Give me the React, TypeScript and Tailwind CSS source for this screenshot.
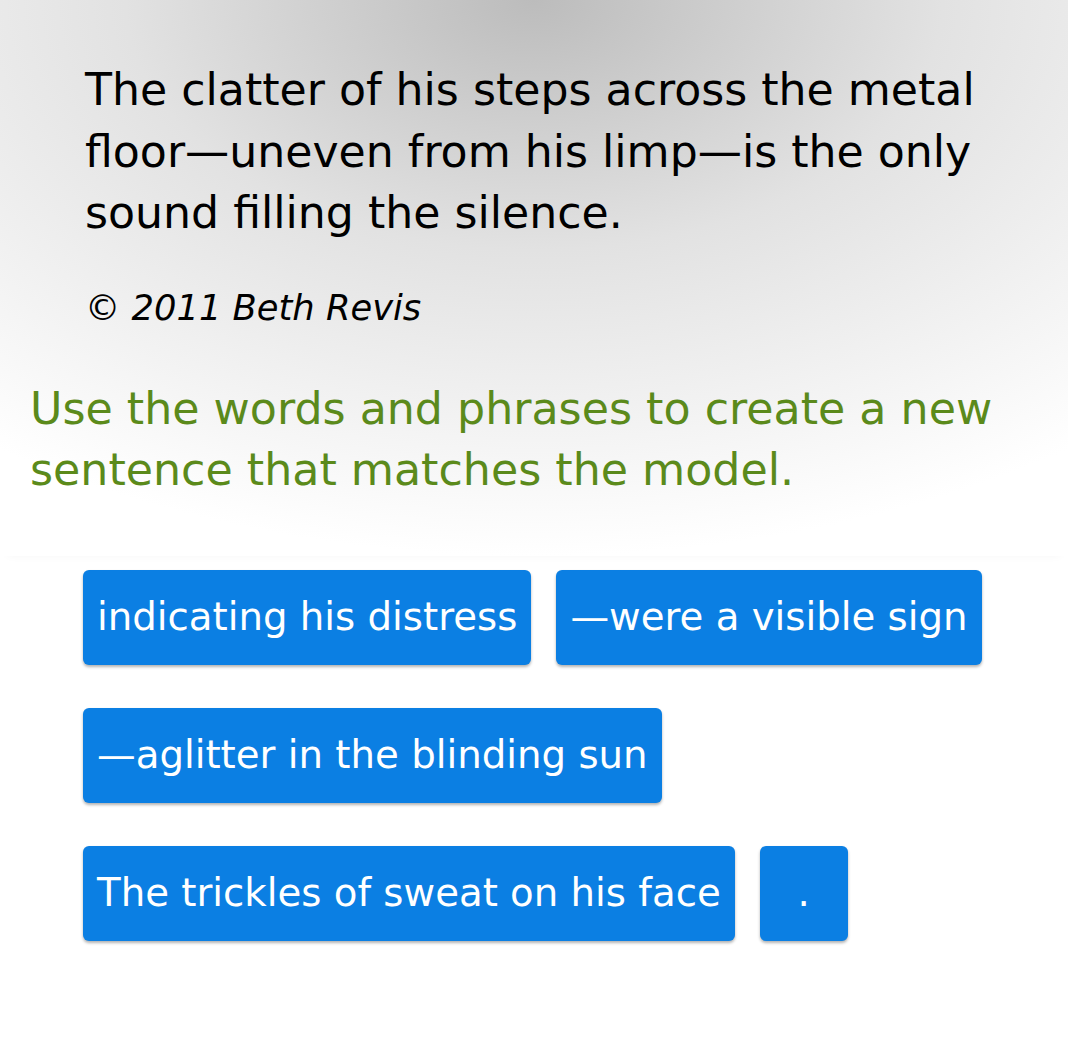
import React from 'react';

const tiles: string[][] = [
  ['indicating his distress', '\u2014were a visible sign'],
  ['\u2014aglitter in the blinding sun'],
  ['The trickles of sweat on his face', '.'],
];

const WordTile: React.FC<{ label: string }> = ({ label }) => (
  <button
    className={`h-[95px] rounded-[6px] bg-[#0b7fe3] text-white text-[38.7px] leading-none shadow-[0_2px_3px_rgba(0,0,0,0.3)] ${
      label === '.' ? 'w-[88px]' : 'px-[14px]'
    }`}
  >
    {label}
  </button>
);

export default function App() {
  return (
    <div className="min-h-[1055px] w-[1068px] bg-white font-['DejaVu_Sans',Verdana,sans-serif]">
      <div className="bg-[radial-gradient(ellipse_85%_100%_at_50%_0%,#bcbcbc_0%,#e2e2e2_45%,#ffffff_100%)] pb-[55px] shadow-[0_6px_10px_-8px_rgba(0,0,0,0.06)]">
        <p className="pl-[85px] pr-[40px] pt-[59px] text-[44.2px] leading-[61.5px] text-black">
          The clatter of his steps across the metal floor—uneven from his limp—is the only sound filling the silence.
        </p>
        <p className="mt-[38px] pl-[85px] text-[35.3px] italic leading-[51px] text-black">© 2011 Beth Revis</p>
        <p className="mt-[45px] pl-[30px] pr-[30px] text-[44.3px] leading-[61.5px] text-[#5b8a1b]">
          Use the words and phrases to create a new sentence that matches the model.
        </p>
      </div>
      <div className="flex flex-col gap-[43px] pl-[83px] pt-[14px]">
        {tiles.map((row, i) => (
          <div key={i} className="flex gap-[25px]">
            {row.map(t => (
              <WordTile key={t} label={t} />
            ))}
          </div>
        ))}
      </div>
    </div>
  );
}
